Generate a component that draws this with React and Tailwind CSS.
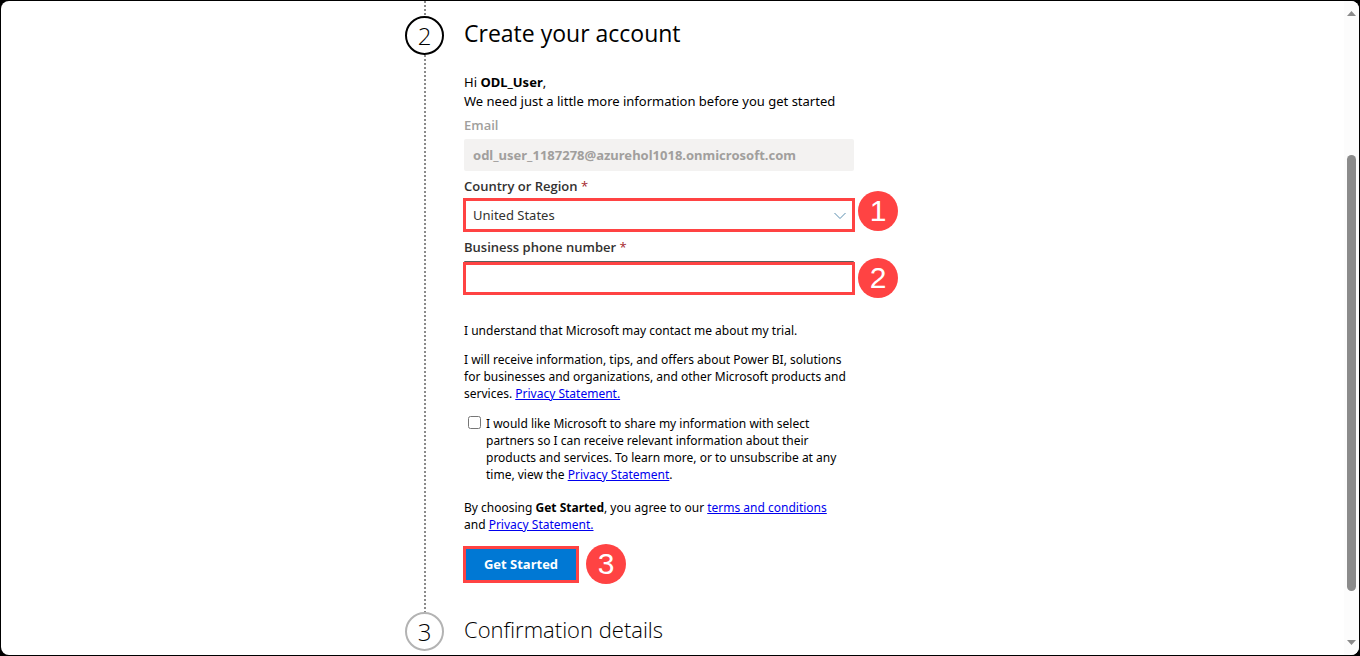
import React from "react";

const dots =
  "w-0.5 bg-[repeating-linear-gradient(to_bottom,#8a8a8a_0px,#8a8a8a_2px,transparent_2px,transparent_4px)]";

function StepCircle({ number, active }) {
  return (
    <div
      className={`flex size-[39px] shrink-0 items-center justify-center rounded-full border-2 font-['Open_Sans',sans-serif] text-2xl leading-8 font-light ${
        active ? "border-black" : "border-[#b3b3b3]"
      }`}
    >
      {number}
    </div>
  );
}

function Badge({ number, className }) {
  return (
    <span
      className={`absolute left-full flex size-10 items-center justify-center rounded-full bg-[#ff4343] font-['Liberation_Sans',sans-serif] text-3xl font-normal text-white ${className}`}
    >
      {number}
    </span>
  );
}

function Link({ children }) {
  return (
    <a href="#" className="text-[#0000ee] underline">
      {children}
    </a>
  );
}

function Label({ htmlFor, children }) {
  return (
    <label
      htmlFor={htmlFor}
      className="block px-px font-['Open_Sans',sans-serif] text-[13px] leading-5 font-semibold text-[#323130]"
    >
      {children} <span className="font-normal text-[#a4262c]">*</span>
    </label>
  );
}

function AccountForm() {
  return (
    <form className="w-[392px] pt-5 pb-[29px]" onSubmit={(e) => e.preventDefault()}>
      <p className="px-px text-[13px] leading-[19px]">
        Hi <b>ODL_User</b>,<br />
        We need just a little more information before you get started
      </p>

      <label
        htmlFor="email"
        className="mt-1 block px-px font-['Open_Sans',sans-serif] text-[13px] leading-5 font-semibold text-[#a19f9d]"
      >
        Email
      </label>
      <div className="mt-1 px-px">
        <input
          id="email"
          type="email"
          disabled
          defaultValue="odl_user_1187278@azurehol1018.onmicrosoft.com"
          className="block h-8 w-full rounded-xs bg-[#f3f2f1] px-[9px] text-[13px] font-bold text-[#a19f9d]"
        />
      </div>

      <div className="mt-[5px]">
        <Label htmlFor="country">Country or Region</Label>
        <div className="relative mt-0.5">
          <select
            id="country"
            className="block h-[34px] w-full appearance-none border-[3px] border-[#ff4343] bg-white px-[7px] pt-0.5 text-[13px] text-[#323130]"
          >
            <option>United States</option>
          </select>
          <svg
            className="pointer-events-none absolute top-[14px] right-2 h-[8px] w-[14px]"
            viewBox="0 0 14 8"
            fill="none"
            stroke="#5b8fb0"
            aria-hidden="true"
          >
            <path d="M1.5 1 L7 6.5 L12.5 1" />
          </svg>
          <Badge number="1" className="-top-[7px] ml-[3px]" />
        </div>
      </div>

      <div className="mt-[5px]">
        <Label htmlFor="phone">Business phone number</Label>
        <div className="relative mt-1">
          <div className="mx-px h-px rounded-t-xs bg-[#605e5c]" />
          <input
            id="phone"
            type="tel"
            className="block h-[33px] w-full border-[3px] border-[#ff4343] bg-white px-[7px] text-[13px]"
          />
          <Badge number="2" className="-top-[3px] ml-[3px]" />
        </div>
      </div>

      <div className="px-px text-xs leading-[17px]">
        <p className="mt-[27px]">I understand that Microsoft may contact me about my trial.</p>
        <p className="mt-3">
          I will receive information, tips, and offers about Power BI, solutions for businesses and organizations, and
          other Microsoft products and services. <Link>Privacy Statement.</Link>
        </p>
        <div className="mt-[13px] flex items-start gap-[5px] pl-1">
          <input id="share" type="checkbox" className="mt-px size-[13px] shrink-0" />
          <p className="w-[360px]">
            <label htmlFor="share">
              I would like Microsoft to share my information with select partners so I can receive relevant information
              about their products and services. To learn more, or to unsubscribe at any time, view the{" "}
            </label>
            <Link>Privacy Statement</Link>.
          </p>
        </div>
        <p className="mt-4 pr-4">
          By choosing <b>Get Started</b>, you agree to our <Link>terms and conditions</Link> and{" "}
          <Link>Privacy Statement.</Link>
        </p>
      </div>

      <div className="relative mt-[13px] w-[116px]">
        <button
          type="submit"
          className="block h-[37px] w-full border-[3px] border-[#ff4343] bg-[#0078d4] font-['Open_Sans',sans-serif] text-[13px] font-bold whitespace-nowrap text-white"
        >
          Get Started
        </button>
        <Badge number="3" className="-top-0.5 ml-[7px]" />
      </div>
    </form>
  );
}

function ScrollBar() {
  return (
    <div className="flex w-[15px] shrink-0 flex-col items-center rounded-r-lg bg-[#fcfcfc] py-[10px]" aria-hidden="true">
      <svg width="9" height="5" viewBox="0 0 9 5" fill="#8b8b8b">
        <path d="M0 5 L4.5 0 L9 5 Z" />
      </svg>
      <div className="flex-[139]" />
      <div className="w-[9px] flex-[436] rounded-full bg-[#8b8b8b]" />
      <div className="flex-[49]" />
      <svg width="9" height="5" viewBox="0 0 9 5" fill="#8b8b8b">
        <path d="M0 0 L4.5 5 L9 0 Z" />
      </svg>
    </div>
  );
}

export default function App() {
  return (
    <div className="flex min-h-screen bg-black p-px font-['Noto_Sans','Open_Sans',sans-serif] text-black">
      <div className="flex flex-1 rounded-lg bg-white">
        <main className="flex flex-1 justify-center">
          <div className="w-[535px]">
            <section className="flex gap-[19px]">
              <div className="flex flex-col items-center">
                <div className={`ml-px h-[15px] ${dots}`} />
                <StepCircle number="2" active />
                <div className={`ml-px flex-1 ${dots}`} />
              </div>
              <div className="pt-[13px]">
                <h2 className="px-px font-['Open_Sans',sans-serif] text-[23px] leading-[39px] font-normal">
                  Create your account
                </h2>
                <AccountForm />
              </div>
            </section>
            <section className="flex gap-[19px] pb-1">
              <StepCircle number="3" />
              <h2 className="px-px font-['Open_Sans',sans-serif] text-[22px] leading-[34px] font-light">
                Confirmation details
              </h2>
            </section>
          </div>
        </main>
        <ScrollBar />
      </div>
    </div>
  );
}
